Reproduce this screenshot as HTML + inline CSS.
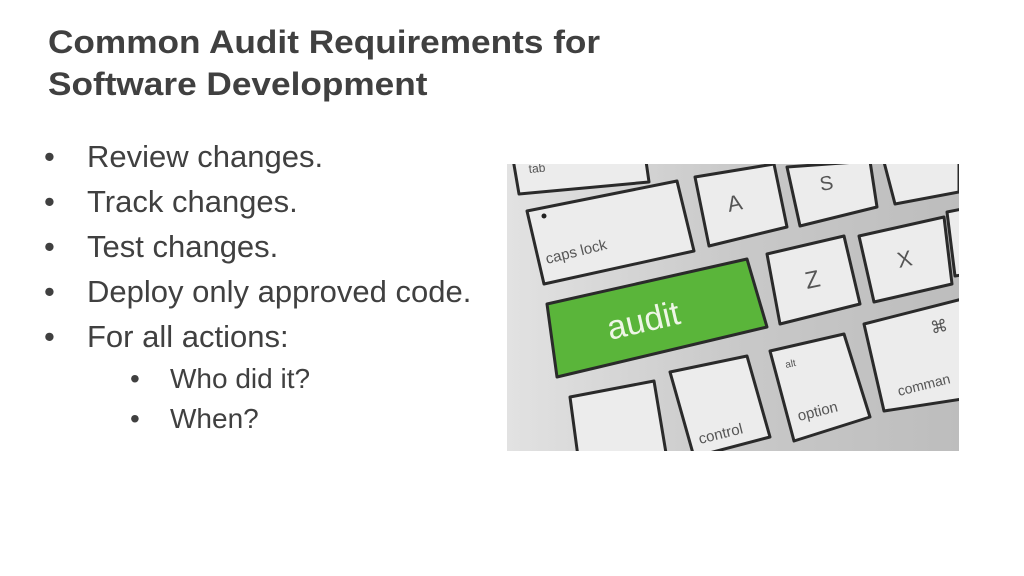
<!DOCTYPE html>
<html><head><style>
body{margin:0;width:1024px;height:576px;background:#fff;position:relative;overflow:hidden;font-family:"Liberation Sans",Arial,sans-serif;color:#404040}
.t{position:absolute;left:48px;top:21px;font-size:32px;font-weight:bold;line-height:42px;white-space:nowrap;transform:scaleX(1.1);transform-origin:0 0}
.b{position:absolute;font-size:31px;white-space:nowrap;line-height:36px}
.s{font-size:28px;line-height:32px}
</style></head><body>
<div class="t">Common Audit Requirements for<br>Software Development</div>
<div class="b" style="left:44px;top:139px">•</div><div class="b" style="left:87px;top:139px">Review changes.</div>
<div class="b" style="left:44px;top:184px">•</div><div class="b" style="left:87px;top:184px">Track changes.</div>
<div class="b" style="left:44px;top:229px">•</div><div class="b" style="left:87px;top:229px">Test changes.</div>
<div class="b" style="left:44px;top:274px">•</div><div class="b" style="left:87px;top:274px">Deploy only approved code.</div>
<div class="b" style="left:44px;top:319px">•</div><div class="b" style="left:87px;top:319px">For all actions:</div>
<div class="b s" style="left:130px;top:363px">•</div><div class="b s" style="left:170px;top:363px">Who did it?</div>
<div class="b s" style="left:130px;top:403px">•</div><div class="b s" style="left:170px;top:403px">When?</div>
<svg style="position:absolute;left:507px;top:164px" width="452" height="287" viewBox="0 0 452 287">
<defs><linearGradient id="bg" x1="0" x2="1"><stop offset="0" stop-color="#e2e2e2"/><stop offset="0.5" stop-color="#c9c9c9"/><stop offset="1" stop-color="#bdbdbd"/></linearGradient></defs>
<rect width="452" height="287" fill="url(#bg)"/>
<g stroke="#2a2a2a" stroke-width="3" stroke-linejoin="round" fill="#ececec">
<polygon points="6,-5 138,-10 142,18 12,30"/>
<polygon points="20,47 170,17 187,87 37,120"/>
<polygon points="188,13 267,0 280,63 202,82"/>
<polygon points="280,3 363,-3 370,43 293,62"/>
<polygon points="377,-2 452,-8 452,28 388,40"/>
<polygon points="260,90 337,72 353,140 273,160"/>
<polygon points="352,72 437,53 445,120 367,138"/>
<polygon points="440,48 460,44 460,110 448,112"/>
<polygon points="357,160 455,135 455,235 377,247"/>
<polygon points="263,187 337,170 363,253 287,277"/>
<polygon points="163,208 240,192 263,273 187,293"/>
<polygon points="63,233 147,217 160,295 72,300"/>
<polygon points="40,140 240,95 260,163 50,213" fill="#5ab53a"/>
</g>
<circle cx="37" cy="52" r="2.5" fill="#222"/>
<g font-family="Liberation Sans,sans-serif" fill="#555">
<text x="40" y="100" font-size="15" transform="rotate(-14 40 100)">caps lock</text>
<text x="222" y="48" font-size="22" transform="rotate(-12 222 48)">A</text>
<text x="314" y="27" font-size="20" transform="rotate(-10 314 27)">S</text>
<text x="300" y="125" font-size="24" transform="rotate(-12 300 125)">Z</text>
<text x="392" y="104" font-size="22" transform="rotate(-12 392 104)">X</text>
<text x="425" y="170" font-size="17" transform="rotate(-12 425 170)">⌘</text>
<text x="392" y="232" font-size="14" transform="rotate(-14 392 232)">comman</text>
<text x="279" y="204" font-size="10" transform="rotate(-12 279 204)">alt</text>
<text x="292" y="257" font-size="15" transform="rotate(-14 292 257)">option</text>
<text x="193" y="280" font-size="15" transform="rotate(-14 193 280)">control</text>
<text x="22" y="9" font-size="12" transform="rotate(-5 22 9)">tab</text>
<text x="103" y="176" font-size="34" fill="#eef6e6" transform="rotate(-13 103 176)">audit</text>
</g>
</svg>
</body></html>
